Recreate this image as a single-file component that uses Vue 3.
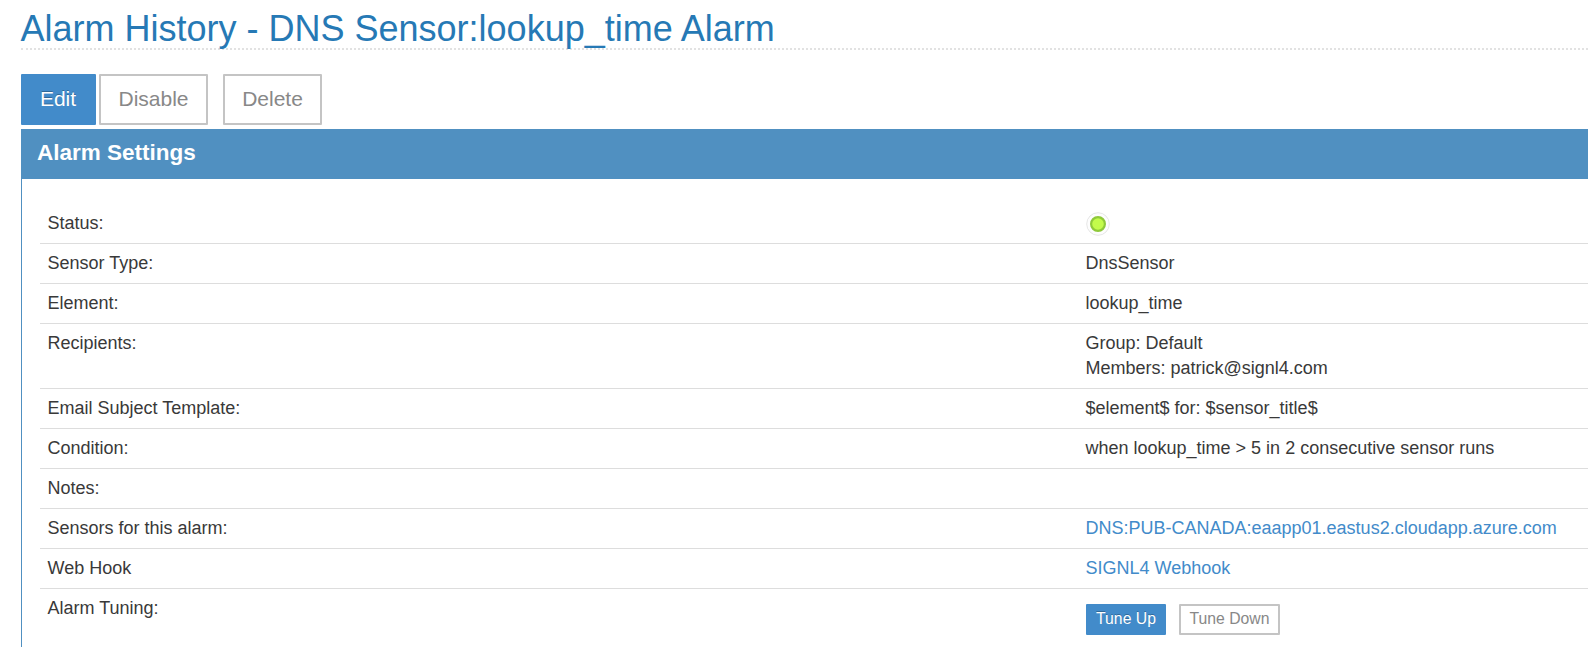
<script setup>
const rows = [
  { label: 'Status:', status: true },
  { label: 'Sensor Type:', lines: ['DnsSensor'] },
  { label: 'Element:', lines: ['lookup_time'] },
  { label: 'Recipients:', lines: ['Group: Default', 'Members: patrick@signl4.com'] },
  { label: 'Email Subject Template:', lines: ['$element$ for: $sensor_title$'] },
  { label: 'Condition:', lines: ['when lookup_time > 5 in 2 consecutive sensor runs'] },
  { label: 'Notes:', lines: [] },
  { label: 'Sensors for this alarm:', link: 'DNS:PUB-CANADA:eaapp01.eastus2.cloudapp.azure.com' },
  { label: 'Web Hook', link: 'SIGNL4 Webhook' },
  { label: 'Alarm Tuning:', tuning: true },
]
</script>

<template>
  <main class="page">
    <h1 class="title">Alarm History - DNS Sensor:lookup_time Alarm</h1>
    <div class="actions">
      <button class="btn primary edit">Edit</button>
      <button class="btn disable">Disable</button>
      <button class="btn delete">Delete</button>
    </div>
    <section class="panel">
      <h2 class="panel-title">Alarm Settings</h2>
      <div class="rows">
        <div v-for="row in rows" :key="row.label" class="row">
          <div class="label">{{ row.label }}</div>
          <div class="value">
            <svg v-if="row.status" class="lamp" width="24" height="24" viewBox="0 0 24 24">
              <circle cx="12" cy="12" r="11.3" fill="#fdfdfd" stroke="#e6e6e6" />
              <circle cx="12" cy="12" r="6.9" fill="#c3fb4b" stroke="#8fc93a" stroke-width="2.2" />
            </svg>
            <a v-else-if="row.link" class="link">{{ row.link }}</a>
            <div v-else-if="row.tuning" class="tuning">
              <button class="btn small primary up">Tune Up</button>
              <button class="btn small down">Tune Down</button>
            </div>
            <template v-else>
              <div v-for="line in row.lines" :key="line">{{ line }}</div>
            </template>
          </div>
        </div>
      </div>
    </section>
  </main>
</template>

<style>
html, body {
  background: #fff;
  overflow: hidden;
}
</style>

<style scoped>
.page {
  height: 647px;
  padding-left: 21px;
  box-sizing: border-box;
  overflow: hidden;
  display: flex;
  flex-direction: column;
  font: 18px/25px "Liberation Sans", Arial, sans-serif;
  color: #393939;
}
.title {
  flex: none;
  box-sizing: border-box;
  height: 50px;
  margin: 0;
  padding-top: 8px;
  border-bottom: 2px dotted #e2e2e2;
  font-size: 36px;
  font-weight: 400;
  line-height: 41px;
  text-indent: -0.5px;
  color: #2679b5;
  white-space: nowrap;
}
.actions {
  flex: none;
  display: flex;
  margin-top: 24px;
  height: 51px;
}
.btn {
  box-sizing: border-box;
  height: 51px;
  padding: 0 0 2px;
  border: 2px solid #c4c4c4;
  border-radius: 1px;
  background: #fff;
  color: #888;
  font: 21px/45px "Liberation Sans", Arial, sans-serif;
  text-align: center;
  white-space: nowrap;
}
.primary {
  border-color: #428bca;
  background: #428bca;
  color: #fff;
  text-shadow: 0 -1px 0 rgba(0, 0, 0, .25);
}
.edit { width: 75px; padding-right: 1px; }
.disable { width: 109px; margin-left: 3px; }
.delete { width: 99px; margin-left: 15px; }
.panel {
  flex: 1;
  margin-top: 4px;
  border-left: 1px solid #5090c1;
}
.panel-title {
  margin: 0 0 0 -1px;
  height: 50px;
  padding-left: 16px;
  background: #5090c1;
  color: #fff;
  font-size: 22.5px;
  line-height: 48px;
}
.rows { padding: 25px 0 0 18px; }
.row {
  display: grid;
  grid-template-columns: 1038px 1fr;
  padding: 7px 0;
  min-height: 25px;
  border-bottom: 1px solid #ddd;
}
.row:last-child { border-bottom: 0; }
.label { padding-left: 7.5px; }
.value {
  padding-left: 8px;
  text-indent: -0.5px;
  white-space: nowrap;
}
.lamp {
  display: block;
  margin-top: 1px;
}
.link { color: #428bca; }
.tuning {
  display: flex;
  padding-top: 8px;
  text-indent: 0;
}
.small {
  height: 31px;
  font-size: 15.75px;
  line-height: 25px;
}
.up { width: 80px; }
.down { width: 101px; margin-left: 13px; }
</style>
